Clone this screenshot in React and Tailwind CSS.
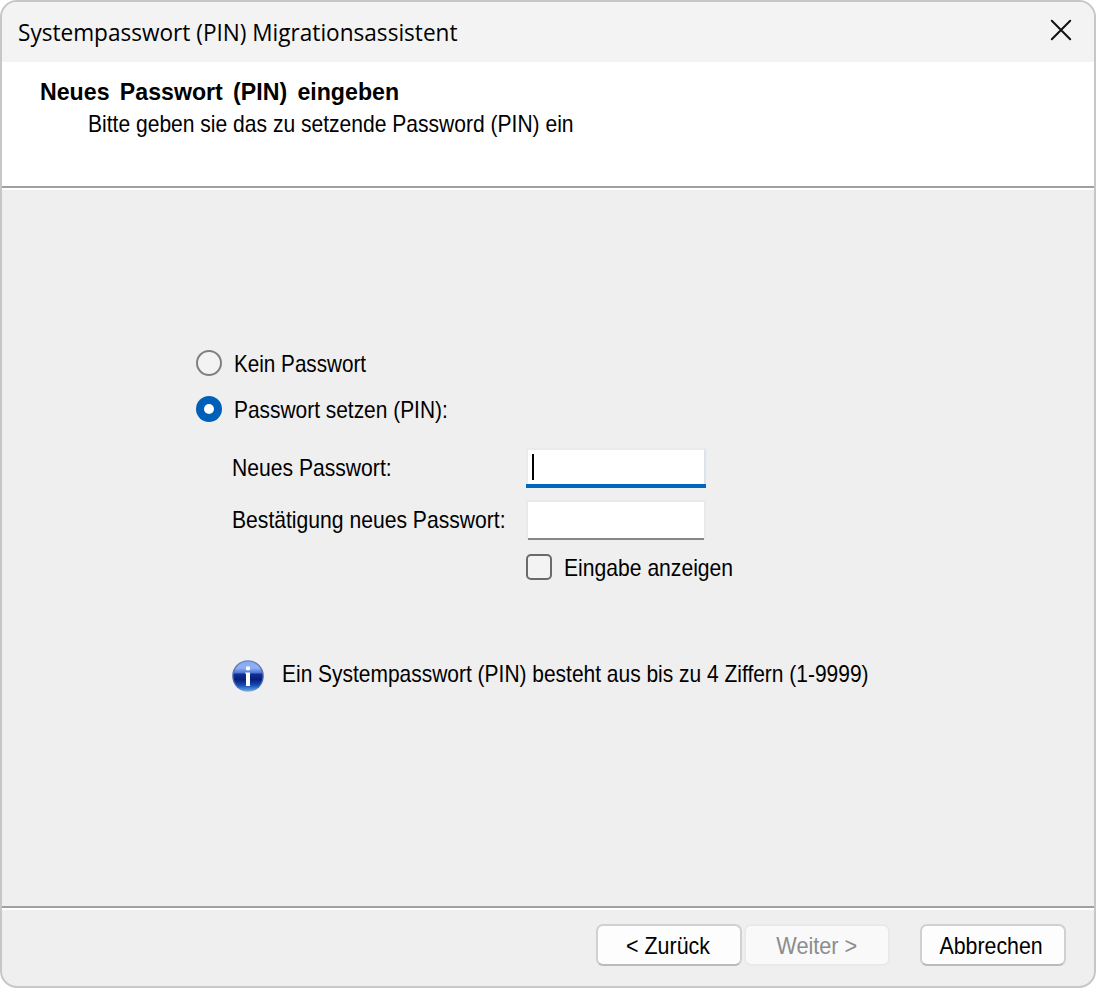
function Label({ className = "", children }) {
  return (
    <span
      className={`block whitespace-nowrap text-[24px] leading-[31px] ${className}`}
    >
      {children}
    </span>
  );
}

function Divider() {
  return <div className="h-1 shrink-0 border-t-2 border-[#a0a0a0] bg-white" />;
}

function CloseIcon() {
  return (
    <svg width="22" height="22" viewBox="0 0 22 22" fill="none" stroke="#111" strokeWidth="2" strokeLinecap="round">
      <path d="M1.8 1.8 20.2 20.2M20.2 1.8 1.8 20.2" />
    </svg>
  );
}

function InfoIcon() {
  return (
    <svg width="32" height="32" viewBox="0 0 32 32">
      <defs>
        <linearGradient id="rim" x1="0" y1="0" x2="0" y2="1">
          <stop offset="0" stopColor="#6f84bd" />
          <stop offset="0.5" stopColor="#5068ab" />
          <stop offset="0.85" stopColor="#3a68bd" />
          <stop offset="1" stopColor="#8ab9e4" />
        </linearGradient>
        <linearGradient id="ball" x1="0" y1="0" x2="0" y2="1">
          <stop offset="0" stopColor="#86aaf0" />
          <stop offset="0.22" stopColor="#8fb0f4" />
          <stop offset="0.38" stopColor="#4f78d6" />
          <stop offset="0.44" stopColor="#12308f" />
          <stop offset="0.62" stopColor="#071f7c" />
          <stop offset="0.8" stopColor="#1346ae" />
          <stop offset="1" stopColor="#4f9fe8" />
        </linearGradient>
      </defs>
      <circle cx="16" cy="16" r="15.8" fill="url(#rim)" />
      <circle cx="16" cy="16" r="14.4" fill="url(#ball)" />
      <rect x="14" y="6.6" width="4" height="3.6" rx="0.8" fill="#fff" />
      <path d="M13.2 12.4h4.8v13.6h-4v-12.4h-.8z" fill="#fff" />
    </svg>
  );
}

export default function App() {
  return (
    <div className="h-[988px] w-[1096px] bg-white">
      <div className="flex h-full w-full flex-col overflow-hidden rounded-[17px] border-2 border-[#c7c7c7] bg-[#efefef] font-['Liberation_Sans',Arial,sans-serif] text-black">
        <header className="flex h-[60px] shrink-0 items-start justify-between bg-[#f3f3f3] pl-4 pr-[22px]">
          <h1 className="mt-[15px] origin-left scale-x-[0.941] whitespace-nowrap font-['Open_Sans',sans-serif] text-[24px] leading-[30px]">
            Systempasswort (PIN) Migrationsassistent
          </h1>
          <button className="mt-[17px]" aria-label="Schließen">
            <CloseIcon />
          </button>
        </header>

        <section className="flex h-[124px] shrink-0 flex-col gap-px bg-white pt-3.5">
          <Label className="ml-[38px] origin-left scale-x-[0.965] font-bold [word-spacing:4px]">
            Neues Passwort (PIN) eingeben
          </Label>
          <Label className="ml-[86px] origin-left scale-x-[0.877]">
            Bitte geben sie das zu setzende Password (PIN) ein
          </Label>
        </section>
        <Divider />

        <main className="flex flex-1 flex-col pl-[194px] pt-[158px]">
          <div className="flex items-start gap-3">
            <span className="mt-0.5 size-[26px] rounded-full border-2 border-[#808080] bg-[#f3f3f3]" />
            <Label className="origin-left scale-x-[0.861]">Kein Passwort</Label>
          </div>
          <div className="mt-[15px] flex items-start gap-3">
            <span className="mt-0.5 flex size-[26px] items-center justify-center rounded-full bg-[#005fb8]">
              <span className="size-[10px] rounded-full bg-white" />
            </span>
            <Label className="origin-left scale-x-[0.871]">Passwort setzen (PIN):</Label>
          </div>

          <div className="ml-9 mt-[23px] grid grid-cols-[294px_180px]">
            <Label className="mt-1 w-max origin-left scale-x-[0.88]">Neues Passwort:</Label>
            <div className="flex h-10 flex-col">
              <div className="flex-1 border-2 border-b-0 border-[#ebebeb] border-r-[#dde3ea] bg-white px-1 pt-1">
                <div className="h-[26px] w-0.5 bg-black" />
              </div>
              <div className="h-1 bg-[#0067c0]" />
            </div>
            <Label className="mt-4 w-max origin-left scale-x-[0.88]">Bestätigung neues Passwort:</Label>
            <div className="mt-3 flex h-10 flex-col">
              <div className="flex-1 border-2 border-b-0 border-[#e9e9e9] bg-white" />
              <div className="mx-0.5 h-0.5 bg-[#868686]" />
            </div>
          </div>

          <div className="ml-[330px] mt-3 flex items-start gap-3">
            <span className="mt-0.5 size-[26px] rounded-[5px] border-2 border-[#6a6a6a] bg-[#f3f3f3]" />
            <Label className="origin-left scale-x-[0.88]">Eingabe anzeigen</Label>
          </div>

          <div className="ml-9 mt-[75px] flex items-start gap-[18px]">
            <span className="mt-0.5">
              <InfoIcon />
            </span>
            <Label className="origin-left scale-x-[0.873]">
              Ein Systempasswort (PIN) besteht aus bis zu 4 Ziffern (1-9999)
            </Label>
          </div>
        </main>

        <Divider />
        <footer className="flex h-[76px] shrink-0 items-start justify-end pr-7 pt-3.5">
          <button className="flex h-[42px] w-[146px] items-center justify-center rounded-[7px] border-2 border-[#d0d0d0] border-b-[#bababa] bg-[#fdfdfd] pr-0.5">
            <Label className="scale-x-[0.893]">&lt; Zurück</Label>
          </button>
          <button
            disabled
            className="ml-0.5 flex h-[42px] w-[146px] items-center justify-center rounded-[7px] border-2 border-[#e9e9e9] bg-[#f9f9f9] text-[#8c8c8c]"
          >
            <Label className="scale-x-[0.903]">Weiter &gt;</Label>
          </button>
          <button className="ml-[30px] flex h-[42px] w-[146px] items-center justify-center rounded-[7px] border-2 border-[#d0d0d0] border-b-[#bababa] bg-[#fdfdfd] pr-1">
            <Label className="scale-x-[0.889]">Abbrechen</Label>
          </button>
        </footer>
      </div>
    </div>
  );
}
